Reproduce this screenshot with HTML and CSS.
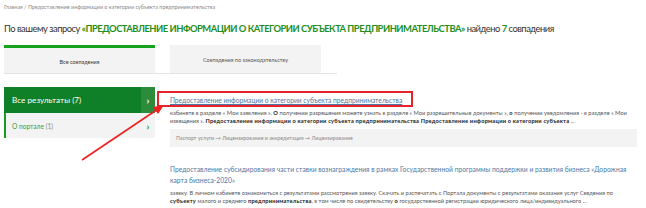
FILE: index.html
```html
<!DOCTYPE html>
<html lang="ru">
<head>
<meta charset="utf-8">
<link rel="stylesheet" href="styles.css">
</head>
<body>
<div class="page">
  <div class="crumbs">Главная / Предоставление информации о категории субъекта предпринимательства</div>
  <h1 class="title">По вашему запросу <b>«ПРЕДОСТАВЛЕНИЕ ИНФОРМАЦИИ О КАТЕГОРИИ СУБЪЕКТА ПРЕДПРИНИМАТЕЛЬСТВА»</b> найдено <b>7</b> совпадения</h1>
  <div class="tabs">
    <div class="tab active">Все совпадения</div>
    <div class="tab">Совпадения по законодательству</div>
  </div>
  <div class="main">
    <div class="side">
      <div class="side-all"><span class="side-label">Все результаты (7)</span><span class="chev-box">&#x203A;</span></div>
      <div class="side-item"><span class="side-sub">О портале <span class="cnt">(1)</span></span><span class="chev">&#x203A;</span></div>
    </div>
    <div class="results">
      <div class="result">
        <a class="r-title u">Предоставление информации о категории субъекта предпринимательства</a>
        <p class="snip">кабинете в разделе « Мои заявления ». <b>О</b> получении разрешения можете узнать в разделе « Мои разрешительные документы », <b>о</b> получении уведомления - в разделе « Мои извещения ». <b>Предоставление информации о категории субъекта предпринимательства Предоставление информации о категории субъекта</b> ...</p>
        <div class="path">Паспорт услуги → Лицензирование и аккредитация → Лицензирование</div>
      </div>
      <div class="result r2">
        <a class="r-title">Предоставление субсидирования части ставки вознаграждения в рамках Государственной программы поддержки и развития бизнеса «Дорожная карта бизнеса-2020»</a>
        <p class="snip">заявку. В личном кабинете ознакомиться с результатами рассмотрения заявку. Скачать и распечатать с Портала документы с результатами оказания услуг Сведения по <b>субъекту</b> малого и среднего <b>предпринимательства</b>, в том числе по свидетельству <b>о</b> государственной регистрации юридического лица/индивидуального ...</p>
      </div>
    </div>
  </div>
  <div class="mark"></div>
  <svg class="arrow" width="90" height="60" viewBox="0 0 90 60">
    <line x1="2" y1="57" x2="78" y2="6" stroke="#f02020" stroke-width="1.6"/>
    <polygon points="84,2 73,4 78,11" fill="#f02020"/>
  </svg>
</div>
</body>
</html>
```
FILE: styles.css
```css
* { box-sizing: border-box; margin: 0; padding: 0; }
html, body { background: #fff; }
body { font-family: Lato, "Noto Sans", sans-serif; color: #333; }
.page { position: relative; width: 646px; height: 208px; padding: 4px 4px 0 4px; overflow: hidden; }
.crumbs { font-size: 5.4px; color: #8a8a8a; line-height: 7px; }
.title { font-size: 9.4px; font-weight: 400; color: #333; line-height: 14px; margin-top: 11px; letter-spacing: -0.5px; white-space: nowrap; }
.title b { color: #1e8e1e; font-weight: 700; }
.tabs { display: flex; gap: 15px; width: 333px; border-bottom: 1px solid #e4e4e4; margin-top: 9px; }
.tab { width: 151px; height: 28px; background: #f3f3f3; font-size: 5.5px; color: #555; display: flex; align-items: center; justify-content: center; padding-top: 2px; }
.tab.active { border-top: 3px solid #16a21e; color: #333; }
.main { display: flex; margin-top: 13px; }
.side { width: 151px; flex: none; }
.side-all { height: 26px; background: #0f8027; display: flex; align-items: stretch; }
.side-label { flex: 1; color: #fff; font-size: 8.2px; display: flex; align-items: center; padding-left: 8px; }
.chev-box { width: 14px; background: #2d8b3c; color: #fff; font-size: 10px; font-weight: 700; display: flex; align-items: center; justify-content: center; }
.side-item { height: 25px; background: #f3f3f3; border-left: 2px solid #179b22; display: flex; align-items: center; }
.side-sub { flex: 1; font-size: 6.6px; color: #3a9a3a; padding-left: 6px; }
.cnt { color: #888; }
.chev { width: 14px; text-align: center; color: #179b22; font-size: 10px; font-weight: 700; }
.results { margin-left: 15px; flex: 1; padding-right: 5px; }
.r-title { display: block; font-size: 6.7px; color: #4c78a5; line-height: 11px; padding-top: 8px; }
.r-title.u { text-decoration: underline; }
.snip { font-size: 5.7px; line-height: 8px; color: #555; margin-top: 3px; }
.snip b { color: #222; font-weight: 700; letter-spacing: 0.2px; }
.path { margin-top: 4px; height: 18px; background: #f3f3f3; font-size: 5.3px; color: #8a8a8a; display: flex; align-items: center; padding-left: 6px; }
.r2 .r-title { font-size: 6.7px; letter-spacing: 0.03px; line-height: 11px; padding-top: 17px; }
.r2 .snip { margin-top: 3px; }
.mark { position: absolute; left: 157px; top: 91px; width: 256px; height: 16px; border: 2px solid #e8232b; }
.arrow { position: absolute; left: 80px; top: 103px; }
```
